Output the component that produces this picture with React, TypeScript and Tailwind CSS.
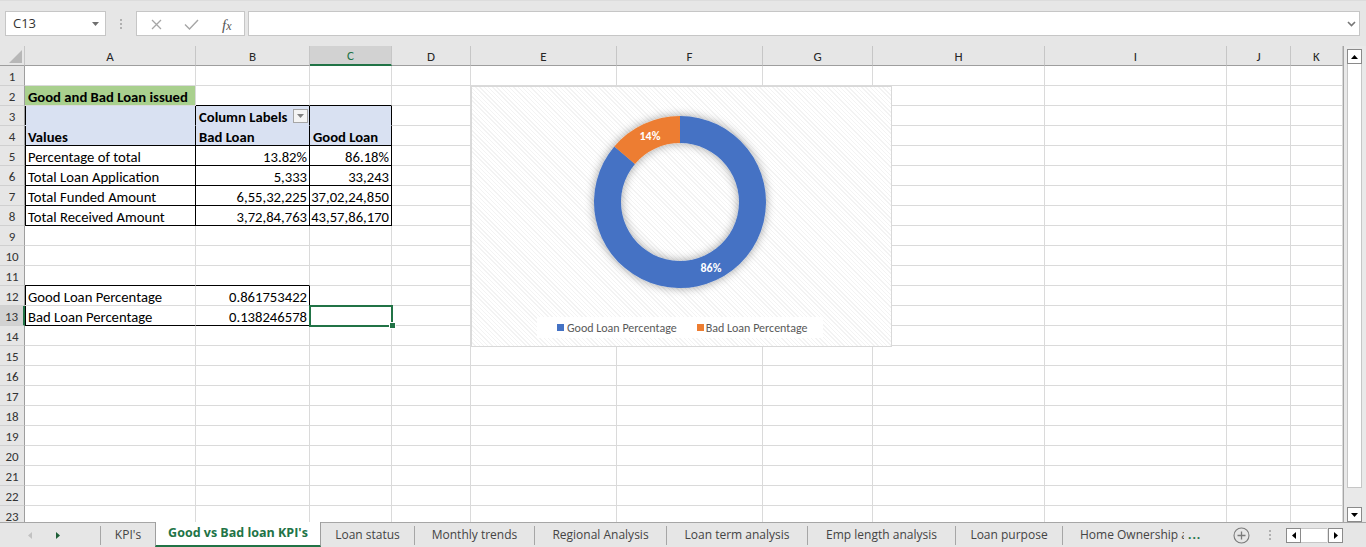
import clsx from 'clsx'

const CELL_FONT = "font-['Carlito','Liberation_Sans',sans-serif]"
const UI_FONT = "font-['Open_Sans','Noto_Sans',sans-serif]"

type Col = { id: string; w: string }

const COLS: Col[] = [
  { id: 'A', w: 'w-[171px]' },
  { id: 'B', w: 'w-[114px]' },
  { id: 'C', w: 'w-[82px]' },
  { id: 'D', w: 'w-[79px]' },
  { id: 'E', w: 'w-[146px]' },
  { id: 'F', w: 'w-[146px]' },
  { id: 'G', w: 'w-[110px]' },
  { id: 'H', w: 'w-[172px]' },
  { id: 'I', w: 'w-[182px]' },
  { id: 'J', w: 'w-[64px]' },
  { id: 'K', w: 'w-[52px]' },
]

type CellSpec = {
  v?: string
  right?: boolean
  bold?: boolean
  fill?: 'green' | 'blue'
  bb?: boolean
  br?: boolean
  bl?: boolean
  filter?: boolean
}

const CELLS: Record<string, CellSpec> = {
  A2: { v: 'Good and Bad Loan issued', bold: true, fill: 'green' },
  B2: { bb: true },
  C2: { bb: true },
  A3: { fill: 'blue', bl: true, br: true },
  B3: { v: 'Column Labels', bold: true, fill: 'blue', br: true, filter: true },
  C3: { fill: 'blue', br: true },
  A4: { v: 'Values', bold: true, fill: 'blue', bl: true, br: true, bb: true },
  B4: { v: 'Bad Loan', bold: true, fill: 'blue', br: true, bb: true },
  C4: { v: 'Good Loan', bold: true, fill: 'blue', br: true, bb: true },
  A5: { v: 'Percentage of total', bl: true, br: true, bb: true },
  B5: { v: '13.82%', right: true, br: true, bb: true },
  C5: { v: '86.18%', right: true, br: true, bb: true },
  A6: { v: 'Total Loan Application', bl: true, br: true, bb: true },
  B6: { v: '5,333', right: true, br: true, bb: true },
  C6: { v: '33,243', right: true, br: true, bb: true },
  A7: { v: 'Total Funded Amount', bl: true, br: true, bb: true },
  B7: { v: '6,55,32,225', right: true, br: true, bb: true },
  C7: { v: '37,02,24,850', right: true, br: true, bb: true },
  A8: { v: 'Total Received Amount', bl: true, br: true, bb: true },
  B8: { v: '3,72,84,763', right: true, br: true, bb: true },
  C8: { v: '43,57,86,170', right: true, br: true, bb: true },
  A11: { bb: true },
  B11: { bb: true },
  A12: { v: 'Good Loan Percentage', bl: true },
  B12: { v: '0.861753422', right: true, br: true },
  A13: { v: 'Bad Loan Percentage', bl: true, bb: true },
  B13: { v: '0.138246578', right: true, br: true, bb: true },
}

const ROWS = Array.from({ length: 23 }, (_, i) => i + 1)

function Cell({ col, row }: { col: Col; row: number }) {
  const s = CELLS[`${col.id}${row}`] ?? {}
  const fillBorder = s.fill === 'blue' && !s.bb
  return (
    <div
      className={clsx(
        'relative flex h-full shrink-0 items-end whitespace-nowrap border-r border-b text-[14.67px] leading-none text-black',
        col.w,
        s.right ? 'justify-end pr-[2px]' : 'pl-[3px]',
        s.bold && 'font-bold',
        s.fill === 'green' && 'bg-[#a9d08e]',
        s.fill === 'blue' && 'bg-[#d9e1f2]',
        s.br ? 'border-r-black' : 'border-r-[#dadada]',
        s.bb ? 'border-b-black' : fillBorder ? 'border-b-[#d9e1f2]' : 'border-b-[#dadada]',
        s.bl && 'shadow-[inset_1px_0_0_#000]',
      )}
    >
      {s.v}
      {s.filter ? (
        <div className="absolute right-[1px] top-[3px] flex h-[14px] w-[15px] items-center justify-center border border-[#a6a6a6] bg-[#f4f4f4]">
          <svg width="7" height="4" viewBox="0 0 7 4">
            <path d="M0 0h7L3.5 4z" fill="#808080" />
          </svg>
        </div>
      ) : null}
    </div>
  )
}

function FormulaBar() {
  return (
    <div className="flex h-[46px] shrink-0 items-start border-t border-[#dcdcdc] pt-[10px]">
      <div className="ml-[5px] flex h-[25px] w-[101px] items-center border border-[#c6c6c6] bg-white pl-[7px]">
        <span className={clsx(UI_FONT, 'text-[13px] text-[#333]')}>C13</span>
        <svg className="ml-auto mr-[6px]" width="7" height="4" viewBox="0 0 7 4">
          <path d="M0 0h7L3.5 4z" fill="#6f6f6f" />
        </svg>
      </div>
      <div className="ml-[14px] mt-[8px] flex h-[10px] w-[3px] flex-col justify-between">
        <span className="h-[2px] w-[2px] bg-[#b0b0b0]" />
        <span className="h-[2px] w-[2px] bg-[#b0b0b0]" />
        <span className="h-[2px] w-[2px] bg-[#b0b0b0]" />
      </div>
      <div className="relative ml-[13px] flex h-[25px] w-[109px] items-center border border-[#c6c6c6] bg-white">
        <svg className="absolute left-[14px] top-[7px]" width="11" height="11" viewBox="0 0 11 11">
          <path d="M1 1l9 9M10 1l-9 9" stroke="#a6a6a6" strokeWidth="1.3" fill="none" />
        </svg>
        <svg className="absolute left-[47px] top-[7px]" width="15" height="11" viewBox="0 0 15 11">
          <path d="M1 5.5l4.5 4.5L14 1" stroke="#a6a6a6" strokeWidth="1.4" fill="none" />
        </svg>
        <span className="absolute left-[85px] top-[2px] font-['Liberation_Serif',serif] text-[15px] italic text-[#555]">
          f<span className="text-[12px]">x</span>
        </span>
      </div>
      <div className="ml-[3px] mr-[6px] flex h-[25px] flex-1 items-center border border-[#c6c6c6] bg-white">
        <svg className="ml-auto mr-[3px]" width="9" height="6" viewBox="0 0 9 6">
          <path d="M1 1l3.5 3.5L8 1" stroke="#777" strokeWidth="1.6" fill="none" />
        </svg>
      </div>
    </div>
  )
}

function arc(cx: number, cy: number, r0: number, r1: number, a0: number, a1: number) {
  const pt = (r: number, a: number) => {
    const t = (a * Math.PI) / 180
    return `${(cx + r * Math.sin(t)).toFixed(2)} ${(cy - r * Math.cos(t)).toFixed(2)}`
  }
  const large = a1 - a0 > 180 ? 1 : 0
  return `M ${pt(r1, a0)} A ${r1} ${r1} 0 ${large} 1 ${pt(r1, a1)} L ${pt(r0, a1)} A ${r0} ${r0} 0 ${large} 0 ${pt(r0, a0)} Z`
}

function DonutChart() {
  const cx = 208
  const cy = 115
  const split = 0.861753422 * 360
  return (
    <div className="absolute left-[471px] top-[40px] h-[261px] w-[421px] border border-[#d9d9d9] bg-white bg-[image:repeating-linear-gradient(45deg,#ffffff_0px,#ffffff_2px,#f3f3f3_2px,#f3f3f3_3px)]">
      <svg className="absolute left-0 top-0" width="419" height="259">
        <defs>
          <filter id="ring-shadow" x="-30%" y="-30%" width="160%" height="160%">
            <feDropShadow dx="0" dy="0" stdDeviation="5" floodColor="#000" floodOpacity="0.38" />
          </filter>
        </defs>
        <g filter="url(#ring-shadow)">
          <path d={arc(cx, cy, 59, 86, 0, split)} fill="#4472c4" />
          <path d={arc(cx, cy, 59, 86, split, 360)} fill="#ed7d31" />
        </g>
        <text
          x="178"
          y="49"
          textAnchor="middle"
          dominantBaseline="central"
          className={clsx(CELL_FONT, 'fill-white text-[12px] font-bold')}
        >
          14%
        </text>
        <text
          x="239"
          y="181"
          textAnchor="middle"
          dominantBaseline="central"
          className={clsx(CELL_FONT, 'fill-white text-[12px] font-bold')}
        >
          86%
        </text>
      </svg>
      <div
        className={clsx(
          CELL_FONT,
          'absolute left-[65px] top-[230px] flex h-[21px] w-[286px] items-center bg-white pl-[20px] text-[12px] text-[#595959]',
        )}
      >
        <span className="h-[7px] w-[7px] bg-[#4472c4]" />
        <span className="ml-[3px]">Good Loan Percentage</span>
        <span className="ml-[20px] h-[7px] w-[7px] bg-[#ed7d31]" />
        <span className="ml-[2px]">Bad Loan Percentage</span>
      </div>
    </div>
  )
}

function Grid() {
  return (
    <div className={clsx(CELL_FONT, 'relative w-[1344px] shrink-0 overflow-hidden border-r border-[#a6a6a6] bg-white')}>
      <div className="flex h-[20px] bg-[#e6e6e6]">
        <div className="relative w-[25px] shrink-0 border-r border-b border-r-[#c6c6c6] border-b-[#9e9e9e]">
          <svg className="absolute left-[9px] top-[4px]" width="13" height="13" viewBox="0 0 13 13">
            <path d="M13 0v13H0z" fill="#b7b7b7" />
          </svg>
        </div>
        {COLS.map((c) => {
          const sel = c.id === 'C'
          return (
            <div
              key={c.id}
              className={clsx(
                'flex shrink-0 items-center justify-center border-r border-r-[#c6c6c6] pt-[2px] text-[13px]',
                c.w,
                sel ? 'border-b-2 border-b-[#217346] bg-[#d2d2d2] text-[#217346]' : 'border-b border-b-[#9e9e9e] text-[#262626]',
              )}
            >
              {c.id}
            </div>
          )
        })}
      </div>
      {ROWS.map((r) => {
        const sel = r === 13
        return (
          <div key={r} className="flex h-[20px]">
            <div
              className={clsx(
                'flex w-[25px] shrink-0 items-center justify-center border-b border-b-[#d0d0d0] pt-[2px] text-[13px] text-[#333]',
                sel ? 'border-r-2 border-r-[#217346] bg-[#d2d2d2]' : 'border-r border-r-[#9e9e9e] bg-[#e6e6e6]',
              )}
            >
              {r}
            </div>
            {COLS.map((c) => (
              <Cell key={c.id} col={c} row={r} />
            ))}
          </div>
        )
      })}
      <DonutChart />
      <div className="absolute left-[309px] top-[259px] h-[22px] w-[84px] border-2 border-[#217346]" />
      <div className="absolute left-[389px] top-[276px] h-[7px] w-[7px] border border-white bg-[#217346]" />
    </div>
  )
}

function ArrowBox({ dir, className }: { dir: 'up' | 'down' | 'left' | 'right'; className?: string }) {
  const d = {
    up: 'M0 4h7L3.5 0z',
    down: 'M0 0h7L3.5 4z',
    left: 'M4 0v7L0 3.5z',
    right: 'M0 0v7l4-3.5z',
  }[dir]
  const vertical = dir === 'up' || dir === 'down'
  return (
    <div className={clsx('flex h-[15px] w-[15px] items-center justify-center border border-[#8a8a8a] bg-white', className)}>
      <svg width={vertical ? 7 : 4} height={vertical ? 4 : 7} viewBox={vertical ? '0 0 7 4' : '0 0 4 7'}>
        <path d={d} fill="#000" />
      </svg>
    </div>
  )
}

function VScroll() {
  return (
    <div className="flex flex-1 flex-col bg-[#e9e9e9] pl-[3px] pt-[3px]">
      <ArrowBox dir="up" />
      <div className="h-[424px] w-[15px] border border-t-0 border-[#c6c6c6] bg-white" />
      <div className="flex-1" />
      <ArrowBox dir="down" />
    </div>
  )
}

const TABS = [
  { label: 'Loan status', w: 'w-[93px]' },
  { label: 'Monthly trends', w: 'w-[119px]' },
  { label: 'Regional Analysis', w: 'w-[131px]' },
  { label: 'Loan term analysis', w: 'w-[140px]' },
  { label: 'Emp length analysis', w: 'w-[147px]' },
  { label: 'Loan purpose', w: 'w-[106px]' },
]

function Sep() {
  return <div className="h-[19px] w-px shrink-0 self-center bg-[#a6a6a6]" />
}

function TabBar() {
  return (
    <div className={clsx(UI_FONT, 'flex h-[25px] shrink-0 border-t border-[#a6a6a6] bg-[#e6e6e6] text-[12px] text-[#444]')}>
      <div className="flex w-[100px] shrink-0 items-center">
        <svg className="ml-[28px]" width="4" height="7" viewBox="0 0 4 7">
          <path d="M4 0v7L0 3.5z" fill="#c2c2c2" />
        </svg>
        <svg className="ml-[24px]" width="4" height="7" viewBox="0 0 4 7">
          <path d="M0 0v7l4-3.5z" fill="#1d5e36" />
        </svg>
      </div>
      <Sep />
      <div className="flex w-[54px] shrink-0 items-center justify-center">KPI's</div>
      <div className="-mt-px flex w-[166px] shrink-0 items-center justify-center border-x border-b-2 border-x-[#9e9e9e] border-b-[#217346] bg-white text-[12.5px] font-bold text-[#217346]">
        Good vs Bad loan KPI's
      </div>
      {TABS.map((t) => (
        <div key={t.label} className="flex shrink-0">
          <div className={clsx('flex shrink-0 items-center justify-center', t.w)}>{t.label}</div>
          <Sep />
        </div>
      ))}
      <div className="flex w-[170px] shrink-0 items-center whitespace-nowrap pl-[17px]">
        <span className="w-[104px] overflow-hidden">Home Ownership an</span>
        <span className="ml-[4px] font-bold tracking-[1px] text-[#217346]">...</span>
      </div>
      <div className="flex h-full w-[17px] shrink-0 items-center justify-center">
        <svg width="17" height="17" viewBox="0 0 17 17">
          <circle cx="8.5" cy="8.5" r="7.5" stroke="#7a7a7a" strokeWidth="1.1" fill="none" />
          <path d="M8.5 4.5v8M4.5 8.5h8" stroke="#7a7a7a" strokeWidth="1.3" />
        </svg>
      </div>
      <div className="ml-[19px] flex h-[10px] w-[3px] flex-col justify-between self-center">
        <span className="h-[2px] w-[2px] bg-[#b0b0b0]" />
        <span className="h-[2px] w-[2px] bg-[#b0b0b0]" />
        <span className="h-[2px] w-[2px] bg-[#b0b0b0]" />
      </div>
      <div className="ml-[14px] flex items-center">
        <ArrowBox dir="left" />
        <div className="h-[15px] w-[26px] border-y border-[#c6c6c6] bg-white" />
        <ArrowBox dir="right" className="ml-[1px]" />
      </div>
    </div>
  )
}

export default function App() {
  return (
    <div className="flex h-[547px] w-[1366px] flex-col overflow-hidden bg-[#e6e6e6]">
      <FormulaBar />
      <div className="flex h-[476px] shrink-0">
        <Grid />
        <VScroll />
      </div>
      <TabBar />
    </div>
  )
}
